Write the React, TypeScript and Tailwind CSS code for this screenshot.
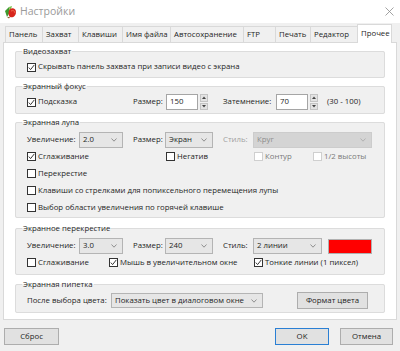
import React from "react";

function Check() {
  return (
    <svg width="7" height="7" viewBox="0 0 7 7">
      <path d="M0.8 3.6 L2.6 5.6 L6.3 0.9" fill="none" stroke="#222" strokeWidth="0.9" />
    </svg>
  );
}

function Cb({ checked, label, disabled }: { checked?: boolean; label: string; disabled?: boolean }) {
  return (
    <div className="flex items-center h-full">
      <span
        className={
          "w-[9px] h-[9px] border bg-white flex items-center justify-center shrink-0 " +
          (disabled ? "border-[#cfcfcf]" : "border-[#333]")
        }
      >
        {checked && <Check />}
      </span>
      <span className={"ml-[2px] whitespace-nowrap " + (disabled ? "text-[#7a7a7a]" : "")}>{label}</span>
    </div>
  );
}

function Chevron({ color = "#7a7a7a" }: { color?: string }) {
  return (
    <svg width="6" height="4" viewBox="0 0 6 4" className="ml-auto mr-[5px] shrink-0">
      <path d="M0.5 0.5 L3 3.2 L5.5 0.5" fill="none" stroke={color} strokeWidth="0.8" />
    </svg>
  );
}

function Sel({ w, text, disabled, h = "h-[16px]" }: { w: string; text: string; disabled?: boolean; h?: string }) {
  return (
    <div
      className={
        w +
        " " +
        h +
        " border flex items-center pl-[3px] shrink-0 " +
        (disabled ? "bg-[#d4d4d4] border-[#cccccc] text-[#8d8d8d]" : "bg-[#e6e6e6] border-[#b4b4b4]")
      }
    >
      <span className="whitespace-nowrap">{text}</span>
      <Chevron color={disabled ? "#a8a8a8" : "#7a7a7a"} />
    </div>
  );
}

function Spin() {
  return (
    <div className="flex flex-col w-[8px] h-[16px] ml-[2px] shrink-0 gap-[1px]">
      <div className="flex-1 bg-[#e3e3e3] border border-[#c4c4c4] flex items-center justify-center">
        <svg width="4" height="3" viewBox="0 0 4 3">
          <path d="M0 3 L2 0.5 L4 3 Z" fill="#444" />
        </svg>
      </div>
      <div className="flex-1 bg-[#e3e3e3] border border-[#c4c4c4] flex items-center justify-center">
        <svg width="4" height="3" viewBox="0 0 4 3">
          <path d="M0 0 L2 2.5 L4 0 Z" fill="#444" />
        </svg>
      </div>
    </div>
  );
}

function Input({ w, v }: { w: string; v: string }) {
  return (
    <div className={w + " h-[16px] bg-white border border-[#a5a5a5] flex items-center pl-[3px] shrink-0"}>{v}</div>
  );
}

function Group({
  title,
  className,
  children,
}: {
  title: string;
  className: string;
  children: React.ReactNode;
}) {
  return (
    <fieldset className={"border border-[#dcdcdc] rounded-[2px] bg-[#f0f0f0] pl-[11px] " + className}>
      <legend className="ml-[-5px] px-[1px] leading-[14px] h-[14px]">{title}</legend>
      {children}
    </fieldset>
  );
}

function Btn({ w, label, def }: { w: string; label: string; def?: boolean }) {
  return (
    <div
      className={
        w +
        " h-[17px] flex items-center justify-center bg-[#e1e1e1] " +
        (def ? "border-[1.5px] border-[#2a7fd4]" : "border border-[#adadad]")
      }
    >
      {label}
    </div>
  );
}

const tabs: { label: string; w: string }[] = [
  { label: "Панель", w: "w-[37px]" },
  { label: "Захват", w: "w-[36px]" },
  { label: "Клавиши", w: "w-[44px]" },
  { label: "Имя файла", w: "w-[48px]" },
  { label: "Автосохранение", w: "w-[73px]" },
  { label: "FTP", w: "w-[32px]" },
  { label: "Печать", w: "w-[35px]" },
  { label: "Редактор", w: "w-[49px]" },
];

export default function App() {
  return (
    <div className="w-[400px] h-[351px] bg-[#f0f0f0] overflow-hidden font-['Open_Sans',sans-serif] text-[7.8px] text-[#1e1e1e] leading-none">
      {/* Title bar */}
      <div className="h-[23px] bg-white flex items-center">
        <svg width="13" height="14" viewBox="0 0 13 14" className="ml-[4px]">
          <path d="M1 6 L5 2 L6 7 L3 12 Z" fill="#3d9a2e" />
          <path d="M5 2 L8 1 L6 7 Z" fill="#7cc24a" />
          <path d="M6 4 C9 2 12 4 12 7 C12 11 9 13 6 12 C4 11 4 6 6 4 Z" fill="#d8261d" />
          <path d="M7 6 C9 5 11 6 11 8" fill="none" stroke="#f27c5b" strokeWidth="0.8" />
          <path d="M3 12 L6 12 L5 13.5 Z" fill="#8a5a2b" />
        </svg>
        <span className="ml-[3px] text-[10.5px] text-[#9a9a9a]">Настройки</span>
        <svg width="9" height="9" viewBox="0 0 9 9" className="ml-auto mr-[6px]">
          <path d="M0.5 0.5 L8.5 8.5 M8.5 0.5 L0.5 8.5" stroke="#8c8c8c" strokeWidth="0.8" />
        </svg>
      </div>

      <div className="px-[3px]">
        {/* Tabs */}
        <div className="flex items-end h-[19px] pl-[2px]">
          {tabs.map((t, i) => (
            <div
              key={t.label}
              className={
                t.w +
                " h-[16px] border-t border-l border-[#d9d9d9] bg-[#f0f0f0] flex items-center pl-[3px] whitespace-nowrap " +
                (i === tabs.length - 1 ? "border-r" : "")
              }
            >
              {t.label}
            </div>
          ))}
          <div className="w-[35px] h-[19px] mb-[-1px] ml-[-2px] relative z-10 bg-white border-t border-l border-r border-[#d9d9d9] flex items-center pl-[3px] pb-[1px]">
            Прочее
          </div>
        </div>

        {/* Panel */}
        <div className="h-[278px] border border-[#d9d9d9] bg-white pt-[1px] px-[11px] flex flex-col">
          <Group title="Видеозахват" className="h-[34px] pt-[2px]">
            <div className="h-[14px]">
              <Cb checked label="Скрывать панель захвата при записи видео с экрана" />
            </div>
          </Group>

          <Group title="Экранный фокус" className="h-[35px] mt-[1px] pt-[1px]">
            <div className="h-[16px] flex items-center">
              <div className="w-[106px] h-full">
                <Cb checked label="Подсказка" />
              </div>
              <span className="w-[33px]">Размер:</span>
              <Input w="w-[32px]" v="150" />
              <Spin />
              <span className="w-[53px] ml-[15px]">Затемнение:</span>
              <Input w="w-[32px]" v="70" />
              <Spin />
              <span className="ml-[9px]">(30 - 100)</span>
            </div>
          </Group>

          <Group title="Экранная лупа" className="h-[103px] mt-[1px] pt-[3px]">
            <div className="h-[16px] flex items-center">
              <span className="w-[52px]">Увеличение:</span>
              <Sel w="w-[44px]" text="2.0" />
              <span className="w-[32px] ml-[10px]">Размер:</span>
              <Sel w="w-[48px]" text="Экран" />
              <span className="w-[30px] ml-[10px] text-[#a0a0a0]">Стиль:</span>
              <Sel w="w-[119px]" text="Круг" disabled />
            </div>
            <div className="h-[17px] flex items-center">
              <div className="w-[139px] h-full">
                <Cb checked label="Сглаживание" />
              </div>
              <div className="w-[88px] h-full">
                <Cb label="Негатив" />
              </div>
              <div className="w-[59px] h-full">
                <Cb label="Контур" disabled />
              </div>
              <div className="h-full">
                <Cb label="1/2 высоты" disabled />
              </div>
            </div>
            <div className="h-[17px]">
              <Cb label="Перекрестие" />
            </div>
            <div className="h-[17px]">
              <Cb label="Клавиши со стрелками для попиксельного перемещения лупы" />
            </div>
            <div className="h-[17px]">
              <Cb label="Выбор области увеличения по горячей клавише" />
            </div>
          </Group>

          <Group title="Экранное перекрестие" className="h-[54px] mt-[3px] pt-[3px]">
            <div className="h-[16px] flex items-center">
              <span className="w-[52px]">Увеличение:</span>
              <Sel w="w-[44px]" text="3.0" />
              <span className="w-[32px] ml-[10px]">Размер:</span>
              <Sel w="w-[48px]" text="240" />
              <span className="w-[30px] ml-[10px]">Стиль:</span>
              <Sel w="w-[69px]" text="2 линии" />
              <div className="w-[44px] h-[15px] ml-[6px] bg-[#ff0000] border border-[#b0b0b0]" />
            </div>
            <div className="h-[17px] flex items-center">
              <div className="w-[82px] h-full">
                <Cb label="Сглаживание" />
              </div>
              <div className="w-[145px] h-full">
                <Cb checked label="Мышь в увеличительном окне" />
              </div>
              <div className="h-full">
                <Cb checked label="Тонкие линии (1 пиксел)" />
              </div>
            </div>
          </Group>

          <Group title="Экранная пипетка" className="h-[36px] mt-[2px] pt-[1px]">
            <div className="h-[17px] flex items-center">
              <span className="w-[84px] whitespace-nowrap">После выбора цвета:</span>
              <Sel w="w-[152px]" h="h-[15px]" text="Показать цвет в диалоговом окне" />
              <div className="ml-[34px]">
                <Btn w="w-[71px]" label="Формат цвета" />
              </div>
            </div>
          </Group>
        </div>

        {/* Bottom buttons */}
        <div className="flex items-center mt-[8px]">
          <div className="ml-[1px]">
            <Btn w="w-[55px]" label="Сброс" />
          </div>
          <div className="ml-auto">
            <Btn w="w-[54px]" label="OK" def />
          </div>
          <div className="ml-[11px] mr-[4px]">
            <Btn w="w-[53px]" label="Отмена" />
          </div>
        </div>
      </div>
    </div>
  );
}
